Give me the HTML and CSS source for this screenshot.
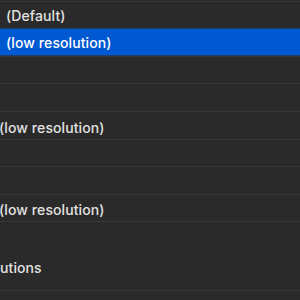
FILE: index.html
```html
<!DOCTYPE html>
<html>
<head>
<meta charset="utf-8">
<link rel="stylesheet" href="styles.css">
</head>
<body>
<div class="list">
  <div class="row h27 ind"><span>(Default)</span></div>
  <div class="row h28 ind sel"><span>(low resolution)</span></div>
  <div class="row h27"></div>
  <div class="row h28"></div>
  <div class="row h28 cut"><span>(low resolution)</span></div>
  <div class="row h27"></div>
  <div class="row h28"></div>
  <div class="row h27 cut"><span>(low resolution)</span></div>
  <div class="row tall"><span>utions</span></div>
  <div class="row end"></div>
</div>
</body>
</html>
```

FILE: styles.css
```css
html, body {
  margin: 0;
  padding: 0;
  background: #2a2a2a;
  width: 300px;
  height: 300px;
  overflow: hidden;
}
.list {
  display: flex;
  flex-direction: column;
  padding-top: 1px;
  font-family: Inter, "Noto Sans", sans-serif;
  font-size: 14px;
  font-weight: 500;
  letter-spacing: 0.1px;
  color: #e2e2e2;
}
.row {
  box-sizing: border-box;
  border-top: 1px solid #373737;
  display: flex;
  align-items: center;
  white-space: nowrap;
  overflow: hidden;
  flex-shrink: 0;
}
.h27 { height: 27px; }
.h28 { height: 28px; }
.end { height: 9px; }
.tall {
  height: 69px;
  align-items: flex-start;
  padding-top: 37px;
}
.ind { padding-left: 6px; }
.cut { padding-left: 0; padding-top: 3px; }
.cut span { margin-left: -1px; }
.sel {
  background: #0059d1;
  color: #ffffff;
  border-top: 1px solid #1b3f6e;
  border-bottom: 1px solid #1b3f6e;
}
```
